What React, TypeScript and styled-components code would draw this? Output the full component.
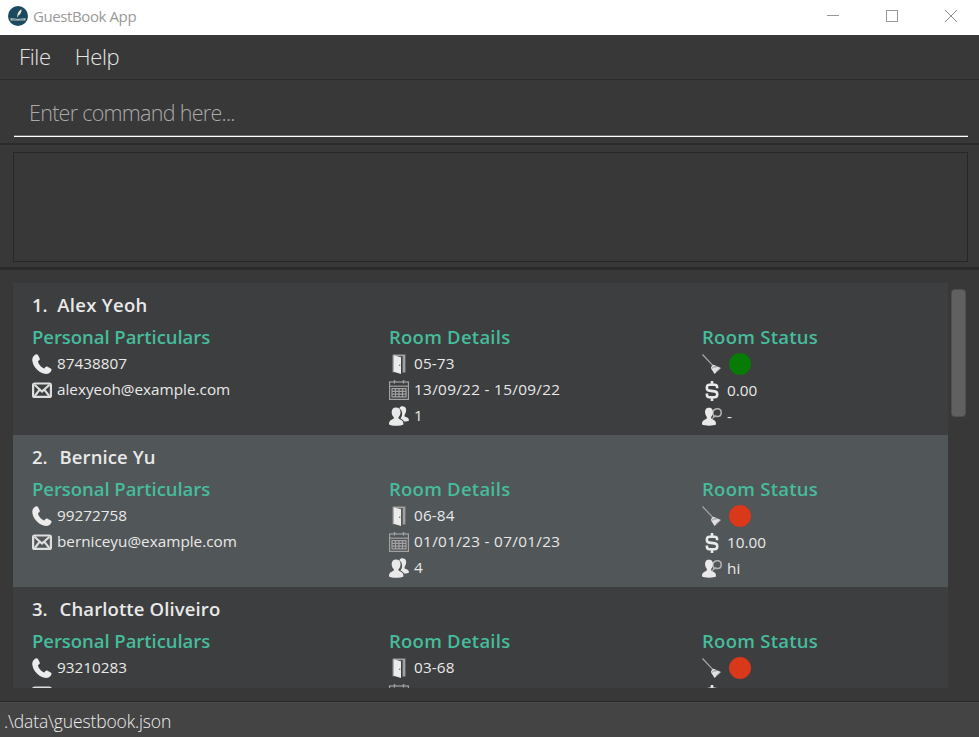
import React from 'react';
import styled, { createGlobalStyle } from 'styled-components';

const GlobalStyle = createGlobalStyle`
  * { box-sizing: border-box; }
  html, body { margin: 0; padding: 0; overflow: hidden; background: #383838; }
  body { font-family: 'Open Sans', 'Noto Sans', sans-serif; }
`;

const Window = styled.div`
  display: flex;
  flex-direction: column;
  width: 979px;
  height: 737px;
  background: #383838;
  overflow: hidden;
`;

const TitleBar = styled.header`
  display: flex;
  align-items: center;
  flex: none;
  height: 35px;
  padding: 0 22px 3px 8px;
  background: #fff;
`;

const WindowTitle = styled.span`
  flex: 1;
  margin-left: 5px;
  font-size: 15px;
  letter-spacing: -0.4px;
  line-height: 20px;
  color: #999;
`;

const WindowControls = styled.div`
  display: flex;
  gap: 47px;
`;

const MenuBar = styled.nav`
  display: flex;
  flex: none;
  gap: 24px;
  height: 45px;
  padding: 6px 19px 0;
  border-bottom: 1px solid #2a2a2a;
`;

const MenuItem = styled.span`
  font-size: 22px;
  font-weight: 300;
  line-height: 31px;
  letter-spacing: -0.35px;
  color: #e6e6e6;
`;

const CommandPane = styled.section`
  flex: none;
  height: 65px;
  padding: 12px 11px 0 14px;
  border-bottom: 2px solid #2b2b2b;
`;

const CommandField = styled.div`
  height: 45px;
  padding-left: 15px;
  border-bottom: 1px solid #fff;
  box-shadow: inset 0 -1px 0 #6e6e6e;
  font-size: 21.5px;
  font-weight: 300;
  line-height: 41px;
  letter-spacing: -0.72px;
  color: #aaa;
`;

const ResultPane = styled.section`
  flex: none;
  height: 125px;
  padding: 7px 11px 0 13px;
  border-bottom: 3px solid #2b2b2b;
`;

const ResultBox = styled.div`
  height: 110px;
  border: 1px solid #272727;
`;

const ListPane = styled.main`
  display: flex;
  flex: none;
  height: 432px;
  padding: 13px 0 13px 13px;
  border-bottom: 1px solid #282828;
`;

const GuestList = styled.div`
  width: 935px;
  height: 405px;
  overflow: hidden;
`;

const ScrollTrack = styled.div`
  padding: 6px 0 0 3px;
`;

const ScrollThumb = styled.div`
  width: 15px;
  height: 128px;
  border: 1px solid #505050;
  border-radius: 4px;
  background: #606060;
`;

const StatusBar = styled.footer`
  flex: 1;
  padding: 4px 0 0 4px;
  border-top: 1px solid #4a4a4a;
  background: #444;
  font-size: 17.5px;
  font-weight: 300;
  line-height: 28px;
  letter-spacing: -0.15px;
  color: #eee;
`;

const Card = styled.article<{ $alternate: boolean }>`
  height: 152px;
  padding: 8px 0 0 19px;
  background: ${(p) => (p.$alternate ? '#515658' : '#3c3e3f')};
`;

const NameRow = styled.h2<{ $gap: number; $spacing: number }>`
  display: flex;
  gap: ${(p) => p.$gap}px;
  margin: 0;
  font-size: 18.5px;
  font-weight: 600;
  line-height: 28px;
  letter-spacing: ${(p) => p.$spacing}px;
  color: #e9e9e9;
`;

const GuestNumber = styled.span`
  letter-spacing: -0.2px;
`;

const Columns = styled.div`
  display: grid;
  grid-template-columns: 357px 313px 1fr;
  margin-top: 4px;
`;

const ColumnTitle = styled.h3<{ $spacing: number }>`
  margin: 0;
  font-size: 18.5px;
  font-weight: 600;
  line-height: 28px;
  letter-spacing: ${(p) => p.$spacing}px;
  color: #46bc9c;
`;

const Detail = styled.div`
  display: flex;
  align-items: center;
  gap: 5px;
  height: 26px;
  font-size: 15.3px;
  line-height: 26px;
  color: #e9e9e9;
  white-space: nowrap;

  svg { flex: none; }
`;

const CleaningDetail = styled(Detail)`
  height: 27px;
  padding-bottom: 1px;
`;

const DetailText = styled.span<{ $spacing?: number }>`
  margin-top: -2px;
  letter-spacing: ${(p) => p.$spacing ?? 0}px;
`;

const RoomLight = styled.span<{ $clean: boolean }>`
  width: 22px;
  height: 22px;
  margin-left: 2px;
  border-radius: 50%;
  background: ${(p) => (p.$clean ? '#067b06' : '#d9381a')};
`;

const Logo = () => (
  <svg width="20" height="20" viewBox="0 0 20 20">
    <circle cx="10" cy="10" r="10" fill="#1b4a60" />
    <path d="M9.4 11 C9 7.5 11 4.5 13.5 3.3 C13.8 6 12.5 8.5 10.4 9.6 L9.7 11.5 Z" fill="#eee5cf" />
    <path d="M2.5 12.2 Q6 12 10 13 Q14 12 17.5 12.2 V14.6 H2.5 Z" fill="#b9c2bd" />
    <path d="M4 13.4 H8.5 M11.5 13.4 H16" stroke="#4b6c78" strokeWidth=".6" />
  </svg>
);

const Minimize = () => (
  <svg width="12" height="12" viewBox="0 0 12 12">
    <path d="M0 5.5H12" stroke="#999" />
  </svg>
);

const Maximize = () => (
  <svg width="12" height="12" viewBox="0 0 12 12">
    <rect x=".5" y=".5" width="11" height="11" fill="none" stroke="#999" />
  </svg>
);

const Close = () => (
  <svg width="12" height="12" viewBox="0 0 12 12">
    <path d="M0 0L12 12M12 0L0 12" stroke="#8c8c8c" />
  </svg>
);

const PhoneIcon = () => (
  <svg width="20" height="20" viewBox="0 0 20 20">
    <path
      d="M3.6 .4 C4.6 -.1 5.5 .1 6 1.1 L7.6 4.2 C8.1 5.1 7.8 5.8 7.1 6.3 L6 7.2 C6.3 10.2 9.3 13.4 12.2 14.4 L13.5 13.1 C14.1 12.5 14.8 12.4 15.6 12.8 L18.7 14.5 C19.6 15.1 19.7 15.8 19.3 16.7 C17.9 19.2 15.5 20.4 12.4 19.8 C6.2 18.4 1 12.6 .3 6.6 C0 3.8 1.2 1.6 3.6 .4 Z"
      fill="#ececec"
    />
  </svg>
);

const MailIcon = () => (
  <svg width="20" height="20" viewBox="0 0 20 20" fill="none" stroke="#dedede">
    <rect x="1.1" y="3.5" width="17.8" height="13.4" rx="1.5" strokeWidth="2.2" />
    <path d="M2.5 4.7L10 11.6L17.5 4.7M2.8 16L7.3 10.2M17.2 16L12.7 10.2" strokeWidth="2.1" />
  </svg>
);

const DoorIcon = () => (
  <svg width="20" height="20" viewBox="0 0 20 20">
    <path d="M4 18.4V.4H16.4V18.4H13.5V2.2H5V18.4Z" fill="#a0a0a0" />
    <path d="M13 2H14V18.4H13Z" fill="#666" />
    <path d="M4.6 1.2L12 3.2V20L4.6 17.8Z" fill="#ebebeb" />
    <circle cx="10.7" cy="11.3" r=".8" fill="#777" />
    <path d="M4 1V18" stroke="#999" strokeWidth="1" />
  </svg>
);

const CalendarIcon = () => (
  <svg width="20" height="20" viewBox="0 0 20 20" fill="none" stroke="#a2a2a2">
    <rect x=".6" y="2" width="18.8" height="17.4" strokeWidth="1.2" />
    <path d="M.5 6.2H19.5" strokeWidth="1.2" />
    <path d="M5.5 0V3.5M14.5 0V3.5" strokeWidth="1.4" />
    <path
      d="M2.5 8.7H17.5M2.5 11.4H17.5M2.5 14.1H17.5M2.5 16.8H17.5M3 8.5V17M6.5 8.5V17M10 8.5V17M13.5 8.5V17M17 8.5V17"
      strokeWidth="1.2"
    />
  </svg>
);

const GuestsIcon = () => (
  <svg width="20" height="20" viewBox="0 0 20 20" fill="#e9e9e9">
    <path d="M10.2 2.4C11 .7 12.2 .1 13.7 .2C16.5 .4 17.5 2.5 17.1 5.1C16.9 6.7 16.3 7.8 15.6 8.7V10.4L18.2 11.6C19.4 12.2 20 13.1 20 14.5C18.7 15.4 17 15.6 15 15.5C14.3 14.2 13.2 13.4 11.6 12.5C12.8 10.8 13.5 8.4 12.9 6C12.5 4.2 11.5 3 10.2 2.4Z" />
    <path d="M7 1.6C10.2 1.6 11.8 3.8 11.5 6.9C11.3 8.8 10.4 10.2 9.5 11.1V12.6L12.2 14C14 14.8 14.5 16.2 14.4 18.4C12 20.2 2.4 20.2 0 18.4C-.1 16.2 .6 14.8 2.2 14L4.8 12.6V11.1C3.8 10.2 2.9 8.8 2.7 6.9C2.4 3.8 3.9 1.6 7 1.6Z" />
  </svg>
);

const BroomIcon = () => (
  <svg width="20" height="20" viewBox="0 0 20 20">
    <path d="M.5 .5L11 11.7" stroke="#a6a6a6" strokeWidth="1.2" />
    <path d="M11.7 10.7L18.9 14L12.6 20L9 14.6Q9 11.2 11.7 10.7Z" fill="#e1e1e1" />
    <path d="M9.6 14.6Q11.5 12 15 12.8" stroke="#777" fill="none" strokeWidth=".8" />
    <path d="M14 18L18.4 14.3" stroke="#999" strokeWidth=".8" />
  </svg>
);

const DollarIcon = () => (
  <svg width="20" height="20" viewBox="0 0 20 20" fill="none" stroke="#e9e9e9" strokeWidth="2.6">
    <path d="M15.1 7.3V6.2Q15.1 3.8 12.7 3.8H7.4Q4.9 3.8 4.9 6.2V7.3Q4.9 9.2 7.3 9.6L12.7 10.4Q15.2 10.8 15.2 13V13.8Q15.2 16.2 12.7 16.2H7.3Q4.9 16.2 4.9 13.8V12.5" />
    <path d="M10 0V4M10 16V20" />
  </svg>
);

const RequestIcon = () => (
  <svg width="20" height="20" viewBox="0 0 20 20">
    <path
      d="M12 9C11.4 8.2 10.8 7.2 10.8 5.9C10.8 3.4 13 1.8 15.3 1.8C17.6 1.8 19.2 3.4 19.2 5.7C19.2 8.1 17.6 9.5 15.4 9.5C14.6 9.5 14 9.3 13.5 9L11.4 10.4Z"
      fill="none"
      stroke="#b4b4b4"
      strokeWidth="1.5"
    />
    <path
      d="M7 .8C10 .8 11.2 2.9 10.9 5.8C10.7 7.6 10.1 8.8 9.2 9.8V11.6L12.2 13.2C13.6 13.9 14 15.4 14 17.5C11.5 19 2.5 19 0 17.5C0 15.4 .4 13.9 1.8 13.2L4.8 11.6V9.8C3.9 8.8 3.3 7.6 3.1 5.8C2.8 2.9 4 .8 7 .8Z"
      fill="#e9e9e9"
    />
  </svg>
);

interface Guest {
  name: string;
  nameGap: number;
  nameSpacing: number;
  phone: string;
  email: string;
  room: string;
  stay: string;
  people: string;
  clean: boolean;
  bill: string;
  request: string;
}

const guests: Guest[] = [
  { name: 'Alex Yeoh', nameGap: 10, nameSpacing: 0.3, phone: '87438807', email: 'alexyeoh@example.com', room: '05-73', stay: '13/09/22 - 15/09/22', people: '1', clean: true, bill: '0.00', request: '-' },
  { name: 'Bernice Yu', nameGap: 12.3, nameSpacing: 0.1, phone: '99272758', email: 'berniceyu@example.com', room: '06-84', stay: '01/01/23 - 07/01/23', people: '4', clean: false, bill: '10.00', request: 'hi' },
  { name: 'Charlotte Oliveiro', nameGap: 12.3, nameSpacing: 0.12, phone: '93210283', email: 'charlotte@example.com', room: '03-68', stay: '', people: '', clean: false, bill: '', request: '' },
];

const GuestCard = ({ guest, index }: { guest: Guest; index: number }) => (
  <Card $alternate={index % 2 === 1}>
    <NameRow $gap={guest.nameGap} $spacing={guest.nameSpacing}>
      <GuestNumber>{index + 1}.</GuestNumber>
      <span>{guest.name}</span>
    </NameRow>
    <Columns>
      <div>
        <ColumnTitle $spacing={-0.05}>Personal Particulars</ColumnTitle>
        <Detail><PhoneIcon /><DetailText>{guest.phone}</DetailText></Detail>
        <Detail><MailIcon /><DetailText>{guest.email}</DetailText></Detail>
      </div>
      <div>
        <ColumnTitle $spacing={0.25}>Room Details</ColumnTitle>
        <Detail><DoorIcon /><DetailText $spacing={0.15}>{guest.room}</DetailText></Detail>
        <Detail><CalendarIcon /><DetailText $spacing={0.32}>{guest.stay}</DetailText></Detail>
        <Detail><GuestsIcon /><DetailText>{guest.people}</DetailText></Detail>
      </div>
      <div>
        <ColumnTitle $spacing={0.27}>Room Status</ColumnTitle>
        <CleaningDetail><BroomIcon /><RoomLight $clean={guest.clean} /></CleaningDetail>
        <Detail><DollarIcon /><DetailText>{guest.bill}</DetailText></Detail>
        <Detail><RequestIcon /><DetailText>{guest.request}</DetailText></Detail>
      </div>
    </Columns>
  </Card>
);

export default function App() {
  return (
    <>
      <GlobalStyle />
      <Window>
        <TitleBar>
          <Logo />
          <WindowTitle>GuestBook App</WindowTitle>
          <WindowControls>
            <Minimize />
            <Maximize />
            <Close />
          </WindowControls>
        </TitleBar>
        <MenuBar>
          <MenuItem>File</MenuItem>
          <MenuItem>Help</MenuItem>
        </MenuBar>
        <CommandPane>
          <CommandField>Enter command here...</CommandField>
        </CommandPane>
        <ResultPane>
          <ResultBox />
        </ResultPane>
        <ListPane>
          <GuestList>
            {guests.map((guest, index) => (
              <GuestCard key={guest.name} guest={guest} index={index} />
            ))}
          </GuestList>
          <ScrollTrack>
            <ScrollThumb />
          </ScrollTrack>
        </ListPane>
        <StatusBar>.\data\guestbook.json</StatusBar>
      </Window>
    </>
  );
}
